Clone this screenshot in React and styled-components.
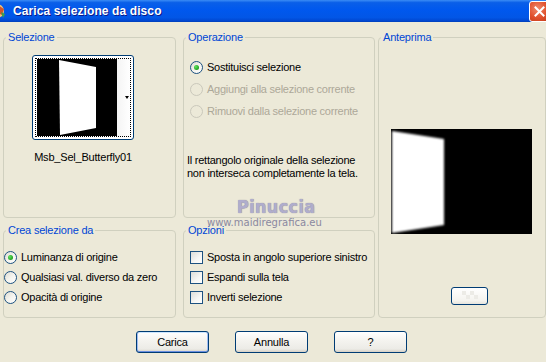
import React from "react";
import styled, { createGlobalStyle } from "styled-components";

//DIALOG CONSTANTS
const OPERATIONS = [
  { label: "Sostituisci selezione", checked: true },
  { label: "Aggiungi alla selezione corrente", disabled: true },
  { label: "Rimuovi dalla selezione corrente", disabled: true },
];

const SOURCES = [
  { label: "Luminanza di origine", checked: true },
  { label: "Qualsiasi val. diverso da zero" },
  { label: "Opacità di origine" },
];

const OPTIONS = [
  "Sposta in angolo superiore sinistro",
  "Espandi sulla tela",
  "Inverti selezione",
];

const BUTTONS = [
  { label: "Carica", primary: true },
  { label: "Annulla" },
  { label: "?" },
];

const GlobalStyle = createGlobalStyle`
  html, body {
    margin: 0;
    padding: 0;
    background: #ece9d8;
  }
  body {
    font-family: "Liberation Sans", Arial, sans-serif;
    font-size: 11px;
    color: #000;
  }
`;

//WINDOW STYLES
const Window = styled.div`
  position: relative;
  width: 546px;
  height: 362px;
  overflow: hidden;
  background: #ece9d8;
`;

const TitleBar = styled.div`
  display: flex;
  align-items: center;
  height: 22px;
  background: linear-gradient(
    to bottom,
    #3b8cf5 0%,
    #0a5fe8 12%,
    #0058ee 45%,
    #0256e6 80%,
    #0046cf 95%,
    #003fb8 100%
  );
`;

const TitleIcon = styled.svg`
  margin-left: -11px;
  flex: none;
`;

const TitleText = styled.span`
  margin-left: 8px;
  color: #fff;
  font-weight: bold;
  font-size: 12px;
  letter-spacing: 0.1px;
  text-shadow: 1px 1px 0 #0a1a8a;
`;

const CloseButton = styled.div`
  margin-left: auto;
  margin-right: -4px;
  width: 21px;
  height: 21px;
  margin-top: 1px;
  box-sizing: border-box;
  border: 1px solid #fff;
  border-radius: 3px;
  background: radial-gradient(circle at 40% 35%, #f08a6c 0%, #e0502c 55%, #c23a1a 100%);
  display: flex;
  align-items: center;
  justify-content: center;
`;

const Body = styled.div`
  padding: 9px 0 0 3px;
`;

const Grid = styled.div`
  display: grid;
  grid-template-columns: 180px 195px 168px;
  grid-template-rows: 187px 94px;
  row-gap: 6px;
`;

const GroupBox = styled.fieldset`
  margin: 0 ${(p) => p.$mr || 0}px 0 0;
  padding: 0;
  min-width: 0;
  border: 1px solid #d0d0bf;
  border-radius: 4px;
  box-sizing: border-box;
  grid-column: ${(p) => p.$col};
  grid-row: ${(p) => p.$row};
`;

const Legend = styled.legend`
  color: #0046d5;
  padding: 0 2px;
  margin-left: 2px;
  line-height: 13px;
  letter-spacing: -0.2px;
`;

const Label = styled.span`
  letter-spacing: -0.25px;
  white-space: nowrap;
  color: ${(p) => (p.$disabled ? "#aca899" : "#000")};
`;

//SELEZIONE
const ThumbColumn = styled.div`
  display: flex;
  flex-direction: column;
  align-items: center;
  width: 102px;
  margin: 11px 0 0 28px;
`;

const ThumbButton = styled.div`
  width: 102px;
  height: 85px;
  box-sizing: border-box;
  border: 1px solid #003c74;
  border-radius: 3px;
  padding: 2px;
  background: #fff;
`;

const FocusRing = styled.div`
  height: 100%;
  box-sizing: border-box;
  border: 1px dotted #000;
  padding: 0 0 0 1px;
  display: flex;
`;

const DropStrip = styled.div`
  flex: 1;
  position: relative;
  background: linear-gradient(to right, #f4f4f4, #fff);
`;

const DropArrow = styled.div`
  position: absolute;
  right: 1px;
  top: 37px;
  width: 0;
  height: 0;
  border-left: 2px solid transparent;
  border-right: 2px solid transparent;
  border-top: 3px solid #000;
`;

const ThumbName = styled.div`
  margin-top: 11px;
  line-height: 13px;
  letter-spacing: -0.2px;
  white-space: nowrap;
`;

//RADIOS AND CHECKBOXES
const ChoiceList = styled.div`
  display: flex;
  flex-direction: column;
  margin-top: ${(p) => p.$top}px;
  padding-left: ${(p) => p.$left}px;
`;

const ChoiceRow = styled.div`
  display: flex;
  align-items: center;
  gap: 4px;
  height: ${(p) => p.$h}px;
`;

const RadioCircle = styled.span`
  flex: none;
  width: 13px;
  height: 13px;
  box-sizing: border-box;
  border-radius: 50%;
  border: 1px solid ${(p) => (p.$disabled ? "#cac8bb" : "#1c5180")};
  background: ${(p) =>
    p.$disabled
      ? "transparent"
      : "linear-gradient(135deg, #dcdbd3 0%, #f4f3ee 50%, #ffffff 100%)"};
  display: flex;
  align-items: center;
  justify-content: center;

  &::after {
    content: "";
    display: ${(p) => (p.$checked ? "block" : "none")};
    width: 5px;
    height: 5px;
    border-radius: 50%;
    background: radial-gradient(circle at 35% 35%, #5ee35e, #21a121 70%);
  }
`;

const CheckBox = styled.span`
  flex: none;
  width: 13px;
  height: 13px;
  box-sizing: border-box;
  border: 1px solid #1c5180;
  background: linear-gradient(135deg, #dcdcd7 0%, #f6f6f4 60%, #ffffff 100%);
`;

const Note = styled.div`
  margin: 32px 0 0 3px;
  line-height: 13px;
  letter-spacing: -0.25px;
  white-space: nowrap;
`;

//ANTEPRIMA
const PreviewImage = styled.svg`
  display: block;
  margin: 85px 0 0 12px;
`;

const SmallButton = styled.div`
  margin: 53px 0 0 72px;
  width: 37px;
  height: 18px;
  box-sizing: border-box;
  border: 1px solid #003c74;
  border-radius: 3px;
  background: linear-gradient(to bottom, #fff, #f4f3ee 80%, #e6e4dc);
  display: flex;
  align-items: center;
  justify-content: center;
`;

//BOTTOM BUTTONS
const ButtonRow = styled.div`
  display: flex;
  gap: 26px;
  margin-top: 13px;
  padding-left: 133px;
`;

const Button = styled.div`
  width: 73px;
  height: 22px;
  box-sizing: border-box;
  border: 1px solid #003c74;
  border-radius: 3px;
  background: linear-gradient(to bottom, #ffffff 0%, #f5f4f0 40%, #ecebe6 85%, #d6d0c5 100%);
  box-shadow: ${(p) =>
    p.$primary
      ? "inset 0 -1px 0 #6a8fe0, inset 1px 0 0 #9fbcf2, inset -1px 0 0 #9fbcf2, inset 0 1px 0 #cee7ff"
      : "none"};
  display: flex;
  align-items: center;
  justify-content: center;
  letter-spacing: -0.2px;
`;

//WATERMARK
const Watermark = styled.div`
  position: absolute;
  left: 207px;
  top: 196px;
  display: flex;
  flex-direction: column;
  pointer-events: none;
`;

const WatermarkName = styled.span`
  margin-left: 30px;
  font-family: "DejaVu Sans Condensed", "DejaVu Sans", sans-serif;
  font-stretch: condensed;
  font-weight: bold;
  font-size: 18px;
  line-height: 22px;
  letter-spacing: 0.3px;
  color: #b0adcc;
  text-shadow: 0 0 1px #7a7890;
`;

const WatermarkUrl = styled.span`
  margin-top: -1px;
  font-family: "DejaVu Sans", Verdana, sans-serif;
  font-size: 10px;
  line-height: 12px;
  color: #8a88a0;
`;

function Radio({ label, checked, disabled, h }) {
  return (
    <ChoiceRow $h={h}>
      <RadioCircle $checked={checked} $disabled={disabled} />
      <Label $disabled={disabled}>{label}</Label>
    </ChoiceRow>
  );
}

function ThumbImage() {
  return (
    <svg width="80" height="77" viewBox="0 0 80 77">
      <defs>
        <filter id="thumbBlur">
          <feGaussianBlur stdDeviation="0.7" />
        </filter>
      </defs>
      <rect width="80" height="77" fill="#000" />
      <polygon points="22,1 59,8 59,69 23,76" fill="#fff" filter="url(#thumbBlur)" />
    </svg>
  );
}

function App() {
  return (
    <Window>
      <GlobalStyle />
      <TitleBar>
        <TitleIcon width="16" height="16" viewBox="0 0 16 16">
          <circle cx="8" cy="8" r="7" fill="#f2c27a" />
          <path d="M10 3 L15 6 L13 12 L9 10 Z" fill="#d2552b" />
          <path d="M12 9 L16 11 L14 15 Z" fill="#3aa14a" />
        </TitleIcon>
        <TitleText>Carica selezione da disco</TitleText>
        <CloseButton>
          <svg width="11" height="11" viewBox="0 0 11 11">
            <path d="M1.5 1.5 L9.5 9.5 M9.5 1.5 L1.5 9.5" stroke="#fff" strokeWidth="2" strokeLinecap="square" />
          </svg>
        </CloseButton>
      </TitleBar>

      <Body>
        <Grid>
          <GroupBox $mr={7} $col="1" $row="1">
            <Legend>Selezione</Legend>
            <ThumbColumn>
              <ThumbButton>
                <FocusRing>
                  <ThumbImage />
                  <DropStrip>
                    <DropArrow />
                  </DropStrip>
                </FocusRing>
              </ThumbButton>
              <ThumbName>Msb_Sel_Butterfly01</ThumbName>
            </ThumbColumn>
          </GroupBox>

          <GroupBox $mr={3} $col="2" $row="1">
            <Legend>Operazione</Legend>
            <ChoiceList $top={12} $left={6}>
              {OPERATIONS.map((op) => (
                <Radio key={op.label} h={22} {...op} />
              ))}
            </ChoiceList>
            <Note>
              Il rettangolo originale della selezione
              <br />
              non interseca completamente la tela.
            </Note>
          </GroupBox>

          <GroupBox $col="3" $row="1 / span 2">
            <Legend>Anteprima</Legend>
            <PreviewImage width="141" height="105" viewBox="0 0 141 105">
              <defs>
                <filter id="previewBlur">
                  <feGaussianBlur stdDeviation="0.9" />
                </filter>
              </defs>
              <rect width="141" height="105" fill="#000" />
              <polygon points="1,2 53,10 53,96 1,104" fill="#fff" filter="url(#previewBlur)" />
            </PreviewImage>
            <SmallButton>
              <svg width="20" height="10" viewBox="0 0 20 10">
                <rect x="2" y="0" width="4" height="4" fill="#ecebe6" />
                <rect x="10" y="0" width="4" height="4" fill="#ecebe6" />
                <rect x="6" y="4" width="4" height="4" fill="#ecebe6" />
                <rect x="14" y="4" width="4" height="4" fill="#ecebe6" />
              </svg>
            </SmallButton>
          </GroupBox>

          <GroupBox $mr={7} $col="1" $row="2">
            <Legend>Crea selezione da</Legend>
            <ChoiceList $top={10} $left={0}>
              {SOURCES.map((src) => (
                <Radio key={src.label} h={20} {...src} />
              ))}
            </ChoiceList>
          </GroupBox>

          <GroupBox $mr={3} $col="2" $row="2">
            <Legend>Opzioni</Legend>
            <ChoiceList $top={10} $left={6}>
              {OPTIONS.map((opt) => (
                <ChoiceRow key={opt} $h={20}>
                  <CheckBox />
                  <Label>{opt}</Label>
                </ChoiceRow>
              ))}
            </ChoiceList>
          </GroupBox>
        </Grid>

        <ButtonRow>
          {BUTTONS.map((b) => (
            <Button key={b.label} $primary={b.primary}>
              {b.label}
            </Button>
          ))}
        </ButtonRow>
      </Body>

      <Watermark>
        <WatermarkName>Pinuccia</WatermarkName>
        <WatermarkUrl>www.maidiregrafica.eu</WatermarkUrl>
      </Watermark>
    </Window>
  );
}

export default App;
